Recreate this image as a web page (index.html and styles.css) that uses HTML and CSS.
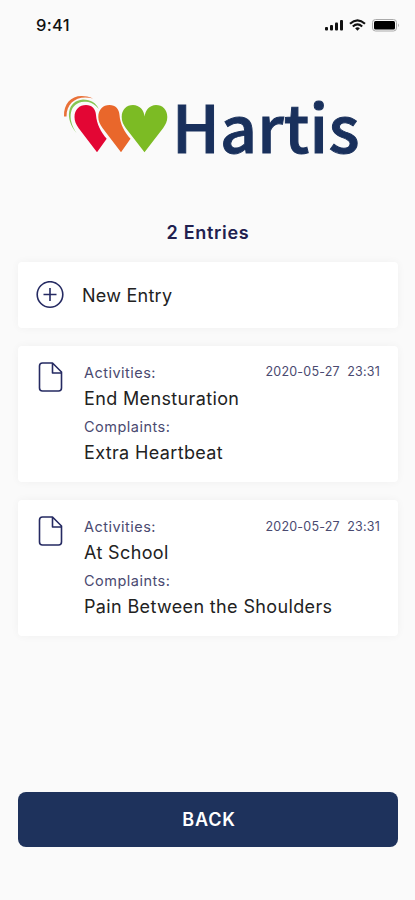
FILE: index.html
```html
<!DOCTYPE html>
<html lang="en">
<head>
<meta charset="utf-8">
<meta name="viewport" content="width=device-width, initial-scale=1">
<title>Hartis</title>
<link rel="stylesheet" href="styles.css">
</head>
<body>
<div class="screen">
  <header class="status">
    <span class="time">9:41</span>
    <svg class="indicators" width="76" height="14" viewBox="0 0 76 14">
      <g fill="#111"><rect x="1" y="9" width="3" height="3.500" rx="1"/><rect x="6" y="7" width="3" height="5.500" rx="1"/><rect x="11" y="4.500" width="3" height="8" rx="1"/><rect x="16" y="2" width="3" height="10.500" rx="1"/></g>
      <g fill="none" stroke="#111" stroke-width="2.100"><path d="M26 5.700Q33.500-1.100 41 5.700"/><path d="M28.800 8.500Q33.500 4.300 38.200 8.500"/></g>
      <path d="M31.100 10.300Q33.500 8.400 35.900 10.300L33.500 12.800Z" fill="#111"/>
      <rect x="48.500" y="1.500" width="24" height="11.500" rx="3" fill="none" stroke="#aaa"/>
      <rect x="50" y="3" width="21" height="8.500" rx="1.500" fill="#000"/>
      <path d="M74 5.500Q75.900 7.300 74 9.100Z" fill="#aaa"/>
    </svg>
  </header>
  <div class="logo">
    <svg width="110" height="70" viewBox="60 90 110 70">
      <path d="M64 116.500C63.500 100 76 91.500 93 98.500C78 94.500 66.500 102 66.500 116.500Z" fill="#e97138"/>
      <path d="M76.500 133C64.500 119 67 100.500 83 99.500C91 99.500 96 103 98.800 109C94 103.500 90 101.800 84 101.800C69.500 102.500 66.500 118.500 76.500 133Z" fill="#86c653"/>
      <path d="M97 152.300L78.500 128C76 124.500 74.500 121 74.500 117C74.500 109.500 79.500 105 86 105C92 105 95.700 109 96 115C96.600 124 101 132 106.700 138.700Z" fill="#e30634"/>
      <path d="M121 152.300L102.500 128C100 124.500 98.300 121 98.300 117C98.300 109.500 103 105 109.500 105C115.500 105 119.200 109 119.500 115C120.100 124 124.500 132 130.500 138.700Z" fill="#e9672b"/>
      <path d="M144.500 152.300L125.700 128C123.200 124.500 121.700 121 121.700 117C121.700 109.500 126.500 105 133 105C139.500 105 144 110 144.600 116.500C145.300 110 149.800 105 156 105C162.500 105 167.300 109.500 167.300 117C167.300 121 165.700 124.500 163.200 128Z" fill="#7cbb24"/>
    </svg>
    <div class="wordmark">Hartis</div>
  </div>
  <h1 class="count">2 Entries</h1>
  <main class="list">
    <section class="card new">
      <svg width="28" height="28" viewBox="0 0 28 28" class="line"><circle cx="14" cy="13.500" r="12.800"/><path d="M14 7V20M7.500 13.500H20.500"/></svg>
      <span class="value new-label">New Entry</span>
    </section>
    <section class="card entry">
      <svg width="25" height="30" viewBox="0 0 25 30" class="line"><path d="M4.500 1H14.500L23.500 10V26Q23.500 29 20.500 29H4.500Q1.500 29 1.500 26V4Q1.500 1 4.500 1ZM14.500 1V11H23.500"/></svg>
      <div class="details">
        <div class="label">Activities:</div><div class="value v1">End Mensturation</div>
        <div class="label l2">Complaints:</div><div class="value v2">Extra Heartbeat</div>
      </div>
      <time class="date">2020-05-27&nbsp; 23:31</time>
    </section>
    <section class="card entry">
      <svg width="25" height="30" viewBox="0 0 25 30" class="line"><path d="M4.500 1H14.500L23.500 10V26Q23.500 29 20.500 29H4.500Q1.500 29 1.500 26V4Q1.500 1 4.500 1ZM14.500 1V11H23.500"/></svg>
      <div class="details">
        <div class="label">Activities:</div><div class="value v1">At School</div>
        <div class="label l2">Complaints:</div><div class="value v2">Pain Between the Shoulders</div>
      </div>
      <time class="date second">2020-05-27&nbsp; 23:31</time>
    </section>
  </main>
  <button class="back">BACK</button>
</div>
</body>
</html>
```
FILE: styles.css
```css
* { box-sizing: border-box; }
body { margin: 0; background: #fafafa; font-family: Inter, "Liberation Sans", sans-serif; }
.screen { height: 900px; padding: 0 17px 53px 18px; display: flex; flex-direction: column; }
.status { height: 50px; padding: 0 0 0 18px; display: flex; align-items: center; justify-content: space-between; }
.time { font-size: 16.500px; font-weight: 500; color: #111; letter-spacing: .3px; }
.indicators { margin-right: -2px; }
.logo { margin: 40px 0 0 42px; height: 70px; flex: none; display: flex; }
.wordmark { margin-left: 2px; font-family: "Noto Sans CJK SC", "Noto Sans", sans-serif; font-size: 64.500px; line-height: 70px; font-weight: 500; -webkit-text-stroke: 1px #19305c; letter-spacing: .2px; color: #19305c; white-space: nowrap; }
.count { margin: 61px 0 17px; height: 24px; line-height: 24px; text-align: center; font-size: 18px; font-weight: 600; letter-spacing: .7px; color: #21204f; }
.list { display: flex; flex-direction: column; gap: 18px; }
.card { background: #fff; border-radius: 4px; box-shadow: 0 0 8px rgba(0,0,0,.045); display: flex; }
.line { fill: none; stroke: #252a62; stroke-width: 1.600; stroke-linejoin: round; flex: none; }
.new { height: 66px; padding: 0 18px; align-items: center; gap: 18px; }
.entry { height: 136px; padding: 16px 18px 0 20px; }
.details { flex: 1; min-width: 0; margin: 1px 0 0 21px; }
.label { font-size: 14.500px; line-height: 20px; letter-spacing: .48px; color: #4a4a70; white-space: nowrap; }
.value { font-size: 18px; line-height: 24px; letter-spacing: .36px; color: #222; white-space: nowrap; }
.new-label { padding-top: 2px; letter-spacing: .25px; }
.v1 { margin-top: 4px; }
.l2 { margin-top: 6px; }
.v2 { margin-top: 4px; }
.date { font-size: 12.500px; line-height: 20px; letter-spacing: .2px; color: #4a4a70; white-space: nowrap; }
.second { padding-top: 1px; }
.back { margin-top: auto; height: 55px; border: 0; border-radius: 8px; background: #1e325c; color: #fff; font: 600 18px Inter, sans-serif; letter-spacing: .8px; padding-left: 8px; }
```
